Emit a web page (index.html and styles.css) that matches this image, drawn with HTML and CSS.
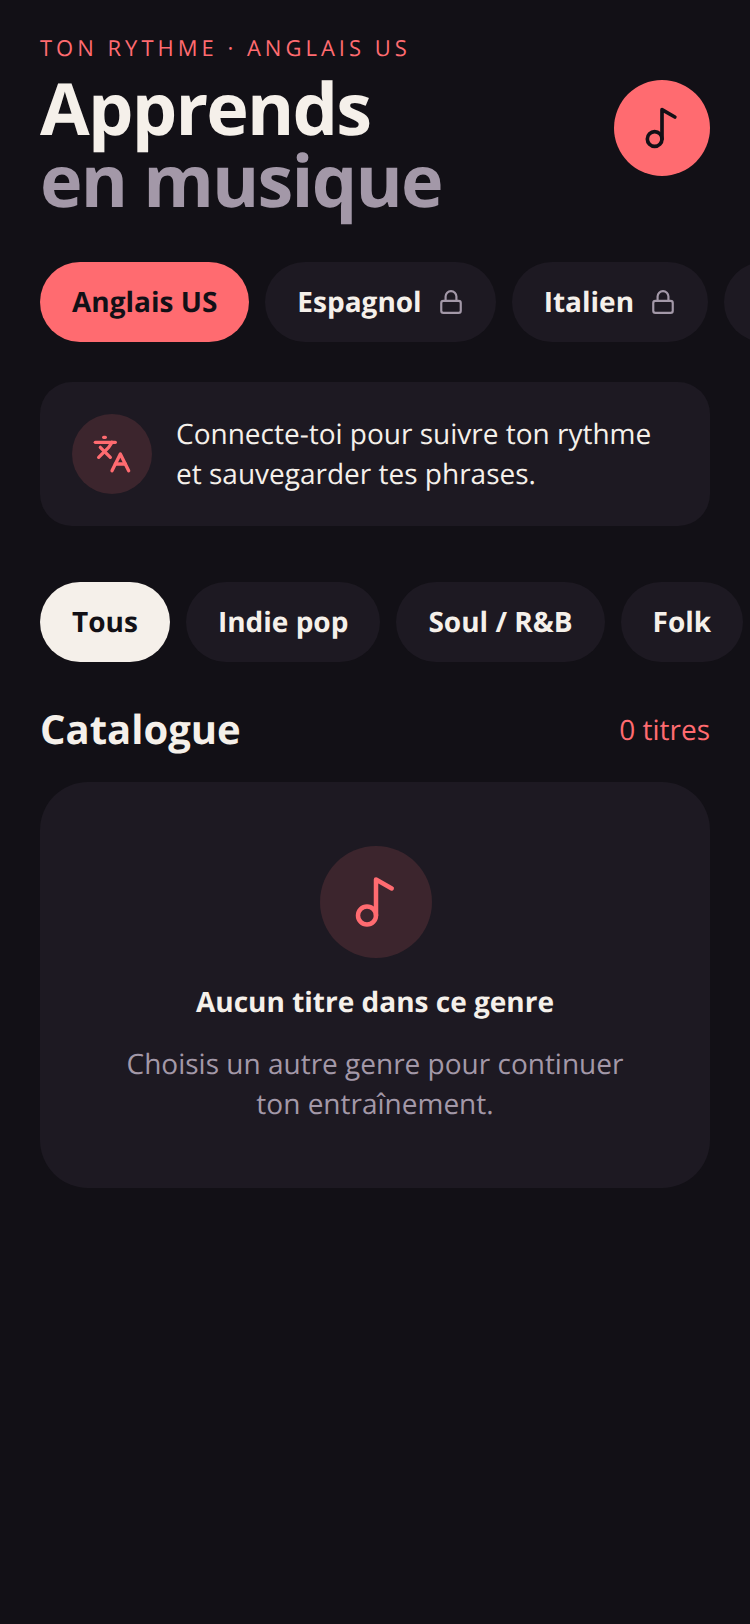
FILE: index.html
```html
<!DOCTYPE html>
<html lang="fr">
<head>
<meta charset="utf-8">
<title>Apprends en musique</title>
<link rel="stylesheet" href="styles.css">
</head>
<body>
<main class="page">
  <header class="hero">
    <div class="hero-text">
      <p class="eyebrow">TON RYTHME · ANGLAIS US</p>
      <h1 class="title">Apprends<br><span class="title-muted">en musique</span></h1>
    </div>
    <div class="hero-badge">
      <svg class="icon icon-hero" viewBox="0 0 24 24"><circle cx="8" cy="18" r="4"/><path d="M12 18V2l7 4"/></svg>
    </div>
  </header>

  <div class="chips-wrap">
    <div class="chips chips-lang">
      <div class="chip chip-accent">Anglais US</div>
      <div class="chip">Espagnol <svg class="icon icon-lock" viewBox="0 0 24 24"><rect x="3" y="11" width="18" height="11" rx="2" ry="2"/><path d="M7 11V7a5 5 0 0 1 10 0v4"/></svg></div>
      <div class="chip">Italien <svg class="icon icon-lock" viewBox="0 0 24 24"><rect x="3" y="11" width="18" height="11" rx="2" ry="2"/><path d="M7 11V7a5 5 0 0 1 10 0v4"/></svg></div>
      <div class="chip chip-blank"></div>
    </div>
  </div>

  <section class="notice">
    <div class="notice-icon">
      <svg class="icon icon-lang" viewBox="0 0 24 24"><path d="m5 8 6 6"/><path d="m4 14 6-6 2-3"/><path d="M2 5h12"/><path d="M7 2h1"/><path d="m22 22-5-10-5 10"/><path d="M14 18h6"/></svg>
    </div>
    <p class="notice-text">Connecte-toi pour suivre ton rythme<br>et sauvegarder tes phrases.</p>
  </section>

  <div class="chips-wrap chips-wrap-genre">
    <div class="chips">
      <div class="chip chip-light">Tous</div>
      <div class="chip">Indie pop</div>
      <div class="chip">Soul / R&amp;B</div>
      <div class="chip">Folk</div>
    </div>
  </div>

  <div class="section-head">
    <h2 class="section-title">Catalogue</h2>
    <span class="section-count">0 titres</span>
  </div>

  <section class="empty">
    <div class="empty-icon">
      <svg class="icon icon-empty" viewBox="0 0 24 24"><circle cx="8" cy="18" r="4"/><path d="M12 18V2l7 4"/></svg>
    </div>
    <h3 class="empty-title">Aucun titre dans ce genre</h3>
    <p class="empty-text">Choisis un autre genre pour continuer<br>ton entraînement.</p>
  </section>
</main>
</body>
</html>
```
FILE: styles.css
```css
* { box-sizing: border-box; }
html, body { margin: 0; padding: 0; }
body {
  background: #121016;
  color: #f5f0ea;
  font-family: "Open Sans", sans-serif;
  text-rendering: geometricPrecision;
  width: 750px;
  height: 1624px;
  overflow: hidden;
}
.page { padding: 32px 0 0 40px; }
.hero { display: flex; justify-content: space-between; align-items: flex-start; padding-right: 40px; }
.eyebrow {
  margin: 0;
  font-size: 22px;
  line-height: 32px;
  letter-spacing: 4px;
  color: #ff6b70;
}
.title {
  margin: 8px 0 0;
  font-size: 72px;
  line-height: 72px;
  font-weight: 700;
  letter-spacing: -1.8px;
}
.title-muted { color: #a398a8; }
.hero-badge {
  width: 96px;
  height: 96px;
  border-radius: 50%;
  background: #ff6b70;
  display: flex;
  align-items: center;
  justify-content: center;
  margin-top: 48px;
}
.icon { fill: none; stroke-linecap: round; stroke-linejoin: round; stroke-width: 2; display: block; flex: none; }
.icon-hero { width: 44px; height: 44px; stroke: #121016; }
.icon-lock { width: 26px; height: 26px; stroke: #a398a8; }
.icon-lang { width: 40px; height: 40px; stroke: #ff6b70; }
.icon-empty { width: 54px; height: 54px; stroke: #ff6b70; }

.chips-wrap { width: 710px; overflow: hidden; margin-top: 46px; }
.chips-wrap-genre { margin-top: 56px; }
.chips { display: flex; gap: 16px; }
.chip {
  height: 80px;
  padding: 0 32px;
  border-radius: 40px;
  background: #1d1922;
  display: flex;
  align-items: center;
  gap: 16px;
  font-size: 28px;
  font-weight: 700;
  white-space: nowrap;
  flex: none;
}
.chip-blank { width: 120px; }
.chip-accent { background: #ff6b70; color: #121016; }
.chip-light { background: #f5f0ea; color: #121016; }

.notice {
  margin-top: 40px;
  width: 670px;
  height: 144px;
  padding: 0 32px;
  background: #1d1922;
  border-radius: 32px;
  display: flex;
  align-items: center;
  gap: 24px;
}
.notice-icon, .empty-icon {
  border-radius: 50%;
  background: #3c252d;
  display: flex;
  align-items: center;
  justify-content: center;
  flex: none;
}
.notice-icon { width: 80px; height: 80px; }
.notice-text { margin: 0; font-size: 28px; line-height: 40px; }

.section-head {
  margin-top: 40px;
  width: 670px;
  display: flex;
  justify-content: space-between;
  align-items: center;
}
.section-title { margin: 0 0 2px; font-size: 40px; line-height: 54px; font-weight: 700; }
.section-count { font-size: 28px; color: #ff6b70; }

.empty {
  margin-top: 24px;
  width: 670px;
  height: 406px;
  padding-top: 64px;
  background: #1d1922;
  border-radius: 48px;
  display: flex;
  flex-direction: column;
  align-items: center;
  text-align: center;
}
.empty-icon { width: 112px; height: 112px; margin-left: 2px; }
.empty-title { margin: 22px 0 0; font-size: 28px; line-height: 44px; font-weight: 700; }
.empty-text { margin: 20px 0 0; font-size: 28px; line-height: 40px; color: #a398a8; }
```
